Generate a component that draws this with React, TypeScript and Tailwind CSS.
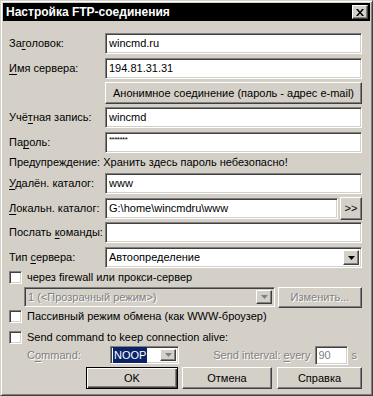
const font = { fontFamily: '"Liberation Sans", Arial, sans-serif' };

const sunken =
  'border border-t-[#808080] border-l-[#808080] border-r-white border-b-white shadow-[inset_1px_1px_0_#404040,inset_-1px_-1px_0_#d4d0c8]';
const raised =
  'border border-t-white border-l-white border-r-[#404040] border-b-[#404040] shadow-[inset_-1px_-1px_0_#808080,inset_1px_1px_0_#d4d0c8]';
const disabledText = 'text-[#808080] [text-shadow:1px_1px_0_#fff]';

const U = ({ children }: { children: string }) => <span className="underline underline-offset-[2px]">{children}</span>;

const Arrow = ({ disabled = false }: { disabled?: boolean }) => (
  <div className={`${raised} w-[16px] h-full bg-[#d4d0c8] flex items-center justify-center shrink-0`}>
    <svg width="7" height="4" viewBox="0 0 7 4">
      <path d="M0 0h7L3.5 4z" fill={disabled ? '#808080' : '#000'} />
    </svg>
  </div>
);

const Field = ({ label, value, className = '' }: { label: React.ReactNode; value?: React.ReactNode; className?: string }) => (
  <div className={`flex items-center h-[21px] ${className}`}>
    <div className="w-[96px] shrink-0">{label}</div>
    <div className={`${sunken} flex-1 h-full bg-white flex items-center pl-[3px]`}>{value}</div>
  </div>
);

const Check = ({ label }: { label: React.ReactNode }) => (
  <div className="flex items-center h-[15px]">
    <div className={`${sunken} w-[13px] h-[13px] bg-white shrink-0`} />
    <span className="ml-[5px]">{label}</span>
  </div>
);

export default function App() {
  return (
    <div
      className="w-[373px] h-[396px] bg-[#d4d0c8] text-[11px] text-black border border-t-[#d4d0c8] border-l-[#d4d0c8] border-r-[#404040] border-b-[#404040] shadow-[inset_1px_1px_0_#fff,inset_-1px_-1px_0_#808080] p-[2px] flex flex-col select-none"
      style={font}
    >
      <div className="h-[18px] bg-black flex items-center justify-between pl-[3px] pr-[2px]">
        <span className="text-white font-bold text-[12px]">Настройка FTP-соединения</span>
        <div className={`${raised} w-[16px] h-[14px] bg-[#d4d0c8] flex items-center justify-center`}>
          <svg width="8" height="7" viewBox="0 0 8 7">
            <path d="M0 0h2l2 2.5L6 0h2L5 3.5 8 7H6L4 4.5 2 7H0l3-3.5z" fill="#000" />
          </svg>
        </div>
      </div>

      <div className="flex flex-col pl-[6px] pr-[8px]">
        <Field className="mt-[12px]" label={<>За<U>г</U>оловок:</>} value="wincmd.ru" />
        <Field className="mt-[4px]" label={<><U>И</U>мя сервера:</>} value="194.81.31.31" />
        <div className="flex mt-[3px] h-[22px]">
          <div className="w-[96px] shrink-0" />
          <div className={`${raised} flex-1 flex items-center justify-center`}>Анонимное соединение (пароль - адрес e-mail)</div>
        </div>
        <Field className="mt-[3px]" label={<>Учё<U>т</U>ная запись:</>} value="wincmd" />
        <Field
          className="mt-[4px]"
          label={<>Па<U>р</U>оль:</>}
          value={<span className="text-[8px] self-start mt-[1px] tracking-[-0.5px]">*******</span>}
        />
        <div className="h-[16px] mt-[1px] flex items-center">Предупреждение: Хранить здесь пароль небезопасно!</div>
        <Field className="mt-[3px]" label={<><U>У</U>далён. каталог:</>} value="www" />
        <div className="flex items-center h-[21px] mt-[4px]">
          <div className="w-[96px] shrink-0"><U>Л</U>окальн. каталог:</div>
          <div className={`${sunken} flex-1 h-full bg-white flex items-center pl-[3px]`}>G:\home\wincmdru\www</div>
          <div className={`${raised} w-[22px] h-[23px] ml-[2px] flex items-center justify-center`}>&gt;&gt;</div>
        </div>
        <Field className="mt-[3px]" label={<>Послать <U>к</U>оманды:</>} />
        <div className="flex items-center h-[21px] mt-[4px]">
          <div className="w-[96px] shrink-0">Тип <U>с</U>ервера:</div>
          <div className={`${sunken} flex-1 h-full bg-white flex items-center pl-[3px] pr-[2px] py-[2px]`}>
            <span className="flex-1">Автоопределение</span>
            <Arrow />
          </div>
        </div>
        <div className="mt-[2px]">
          <Check label="через firewall или прокси-сервер" />
        </div>
        <div className="flex items-center h-[20px] mt-[2px] pl-[15px]">
          <div className={`${sunken} w-[251px] h-full bg-[#d4d0c8] flex items-center pl-[3px] pr-[2px] py-[2px]`}>
            <span className={`flex-1 ${disabledText}`}>1 (&lt;Прозрачный режим&gt;)</span>
            <Arrow disabled />
          </div>
          <div className={`${raised} ml-[3px] flex-1 h-[21px] flex items-center justify-center ${disabledText}`}>Изменить...</div>
        </div>
        <div className="mt-[2px]">
          <Check label="Пассивный режим обмена (как WWW-броузер)" />
        </div>
        <div className="mt-[6px]">
          <Check label="Send command to keep connection alive:" />
        </div>
        <div className="flex items-center h-[18px] mt-[1px] whitespace-nowrap">
          <span className={`w-[101px] pl-[18px] shrink-0 ${disabledText}`}>C<U>o</U>mmand:</span>
          <div className={`${sunken} w-[69px] h-full bg-white flex items-center pl-[2px] pr-[2px] py-[2px] shrink-0`}>
            <span className="flex-1 flex"><span className="bg-[#0a246a] text-white px-[1px]">NOOP</span></span>
            <Arrow disabled />
          </div>
          <span className={`ml-auto ${disabledText}`}>Send interval: <U>e</U>very</span>
          <div className={`${sunken} ml-[4px] w-[33px] h-[19px] bg-white flex items-center pl-[3px] text-[#808080] shrink-0`}>90</div>
          <span className={`ml-[4px] mr-[5px] ${disabledText}`}>s</span>
        </div>
        <div className="flex justify-end mt-[3px] h-[22px]">
          <div className="w-[92px] border border-black shadow-[inset_1px_1px_0_#fff,inset_-1px_-1px_0_#404040,inset_-2px_-2px_0_#808080] flex items-center justify-center">OK</div>
          <div className={`${raised} w-[90px] ml-[4px] flex items-center justify-center`}>Отмена</div>
          <div className={`${raised} w-[85px] ml-[5px] flex items-center justify-center`}>Справка</div>
        </div>
      </div>
    </div>
  );
}
